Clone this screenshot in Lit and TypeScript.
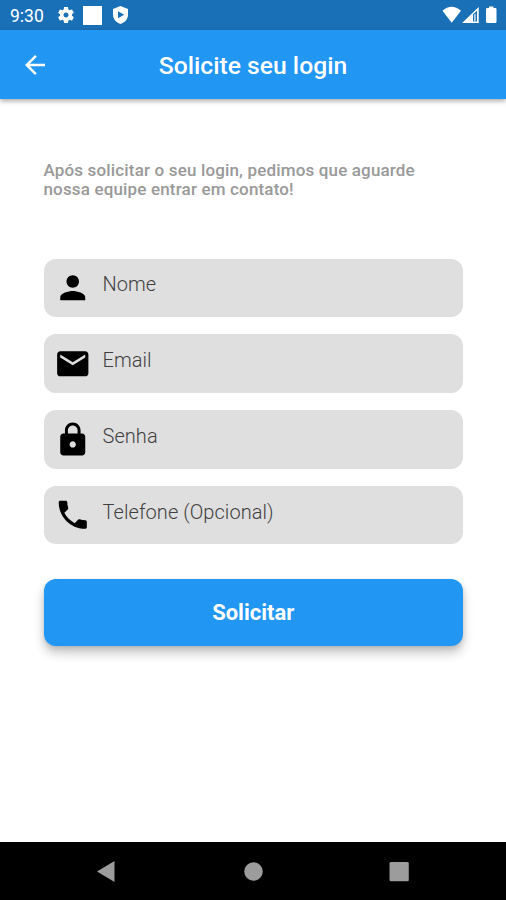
import { LitElement, html, css, svg } from "lit";
import { customElement, property } from "lit/decorators.js";

const icons: Record<string, string> = {
  person: "M12 12c2.21 0 4-1.79 4-4s-1.79-4-4-4-4 1.79-4 4 1.79 4 4 4zm0 2c-2.67 0-8 1.34-8 4v2h16v-2c0-2.66-5.33-4-8-4z",
  mail: "M20 4H4c-1.1 0-1.99.9-1.99 2L2 18c0 1.1.9 2 2 2h16c1.1 0 2-.9 2-2V6c0-1.1-.9-2-2-2zm0 4l-8 5-8-5V6l8 5 8-5v2z",
  lock: "M18 8h-1V6c0-2.76-2.24-5-5-5S7 3.24 7 6v2H6c-1.1 0-2 .9-2 2v10c0 1.1.9 2 2 2h12c1.1 0 2-.9 2-2V10c0-1.1-.9-2-2-2zm-6 9c-1.1 0-2-.9-2-2s.9-2 2-2 2 .9 2 2-.9 2-2 2zm3.1-9H8.9V6c0-1.71 1.39-3.1 3.1-3.1s3.1 1.39 3.1 3.1v2z",
  phone: "M6.62 10.79c1.44 2.83 3.76 5.14 6.59 6.59l2.2-2.2c.27-.27.67-.36 1.02-.24 1.12.37 2.33.57 3.57.57.55 0 1 .45 1 1V20c0 .55-.45 1-1 1-9.39 0-17-7.61-17-17 0-.55.45-1 1-1h3.5c.55 0 1 .45 1 1 0 1.25.2 2.45.57 3.57.11.35.03.74-.25 1.02l-2.2 2.2z",
  back: "M20 11H7.83l5.59-5.59L12 4l-8 8 8 8 1.41-1.41L7.83 13H20v-2z",
  gear: "M19.14 12.94c.04-.3.06-.61.06-.94 0-.32-.02-.64-.07-.94l2.03-1.58c.18-.14.23-.41.12-.61l-1.92-3.32c-.12-.22-.37-.29-.59-.22l-2.39.96c-.5-.38-1.03-.7-1.62-.94l-.36-2.54c-.04-.24-.24-.41-.48-.41h-3.84c-.24 0-.43.17-.47.41l-.36 2.54c-.59.24-1.13.57-1.62.94l-2.39-.96c-.22-.08-.47 0-.59.22L2.74 8.87c-.12.21-.08.47.12.61l2.03 1.58c-.05.3-.09.63-.09.94s.02.64.07.94l-2.03 1.58c-.18.14-.23.41-.12.61l1.92 3.32c.12.22.37.29.59.22l2.39-.96c.5.38 1.03.7 1.62.94l.36 2.54c.05.24.24.41.48.41h3.84c.24 0 .44-.17.47-.41l.36-2.54c.59-.24 1.13-.56 1.62-.94l2.39.96c.22.08.47 0 .59-.22l1.92-3.32c.12-.22.07-.47-.12-.61l-2.01-1.58zM12 15c-1.65 0-3-1.35-3-3s1.35-3 3-3 3 1.35 3 3-1.35 3-3 3z",
};

@customElement("app-icon")
export class AppIcon extends LitElement {
  @property() name = "";

  static styles = css`
    :host { display: block; flex: none; }
    .glyph { display: block; width: 100%; height: 100%; fill: currentColor; }
  `;

  render() {
    return html`<svg class="glyph" viewBox="0 0 24 24">${svg`<path d=${icons[this.name]}></path>`}</svg>`;
  }
}

@customElement("form-field")
export class FormField extends LitElement {
  @property() icon = "";
  @property() label = "";

  static styles = css`
    :host {
      display: flex;
      align-items: center;
      box-sizing: border-box;
      height: 58.5px;
      padding-left: 10.5px;
      border-radius: 12px;
      background: #dfdfdf;
    }
    .icon { width: 37.5px; height: 37.5px; color: #000; }
    .label {
      margin-left: 11px;
      padding-bottom: 7px;
      color: #3f3f3f;
      font-size: 20px;
      font-weight: 300;
      line-height: 24px;
      letter-spacing: 0.06px;
    }
  `;

  render() {
    return html`
      <app-icon class="icon" name=${this.icon}></app-icon>
      <span class="label">${this.label}</span>
    `;
  }
}

@customElement("app-root")
export class AppRoot extends LitElement {
  static styles = css`
    :host {
      display: flex;
      flex-direction: column;
      width: 506px;
      height: 900px;
      overflow: hidden;
      background: #fff;
      font-family: Roboto, "Liberation Sans", sans-serif;
    }
    .status {
      display: flex;
      align-items: center;
      flex: none;
      box-sizing: border-box;
      height: 30px;
      padding: 0 8px 0 10px;
      background: #1a70b7;
      color: #fff;
    }
    .time { width: 46px; padding-top: 2px; font-size: 17.5px; line-height: 20px; white-space: nowrap; }
    .gear { width: 20px; height: 20px; }
    .square { width: 19px; height: 19px; margin: 1px 11px 0 7px; background: #fff; }
    .shield { width: 15px; height: 18px; }
    .signals { display: flex; margin-left: auto; }
    .bar {
      display: grid;
      grid-template-columns: 70px 1fr 70px;
      align-items: center;
      flex: none;
      height: 69px;
      background: #2196f3;
      color: #fff;
      box-shadow: 0 2px 5px rgba(0, 0, 0, 0.34);
    }
    .back { width: 30px; height: 30px; justify-self: center; }
    .title {
      margin: 0;
      padding-top: 3px;
      text-align: center;
      font-size: 24.7px;
      line-height: 30px;
      font-weight: 500;
    }
    .content { flex: 1; padding: 61.5px 43px 0 43.5px; }
    .intro {
      margin: 0;
      color: #999;
      font-size: 17px;
      line-height: 19.5px;
      font-weight: 500;
      letter-spacing: 0.16px;
    }
    .line { display: block; white-space: nowrap; }
    .fields { display: grid; gap: 17.3px; margin-top: 59px; }
    .submit {
      display: block;
      width: 100%;
      height: 67px;
      margin-top: 34.6px;
      padding: 2px 0 0;
      border: 0;
      border-radius: 12px;
      background: #2196f3;
      color: #fff;
      font: 700 22px/26px Roboto, "Liberation Sans", sans-serif;
      box-shadow: 0 7px 11px rgba(0, 0, 0, 0.22), 0 2px 5px rgba(0, 0, 0, 0.12);
    }
    .nav { flex: none; height: 58.5px; background: #000; }
    .keys { display: block; fill: #9c9c9c; }
  `;

  render() {
    return html`
      <div class="status">
        <span class="time">9:30</span>
        <app-icon class="gear" name="gear"></app-icon>
        <div class="square"></div>
        <svg class="shield" viewBox="0 0 15 18">
          <path fill="#fff" d="M7.5 0L15 2.9V8.5C15 13 12 16.5 7.5 18C3 16.5 0 13 0 8.5V2.9Z"></path>
          <path fill="#1a70b7" d="M5 5.2L11.2 8.7L5 12.2Z"></path>
        </svg>
        <svg class="signals" width="56" height="18" viewBox="0 0 56 18" fill="#fff">
          <path d="M0.5 4.8Q9.5 -3.2 19 4.8L9.7 16.8Z"></path>
          <path fill-rule="evenodd" d="M20 17L36.7 1V17ZM31 8.3V15.5H35V4.8Z"></path>
          <path d="M32.3 8.5L33.5 7.5V15.5H32.3Z"></path>
          <path d="M47 0.5H51.5V2H53.2Q54.5 2 54.5 3.3V15.7Q54.5 17 53.2 17H45.3Q44 17 44 15.7V3.3Q44 2 45.3 2H47Z"></path>
        </svg>
      </div>
      <header class="bar">
        <app-icon class="back" name="back"></app-icon>
        <h1 class="title">Solicite seu login</h1>
      </header>
      <main class="content">
        <p class="intro">
          <span class="line">Após solicitar o seu login, pedimos que aguarde</span>
          <span class="line">nossa equipe entrar em contato!</span>
        </p>
        <div class="fields">
          <form-field icon="person" label="Nome"></form-field>
          <form-field icon="mail" label="Email"></form-field>
          <form-field icon="lock" label="Senha"></form-field>
          <form-field icon="phone" label="Telefone (Opcional)"></form-field>
        </div>
        <button class="submit">Solicitar</button>
      </main>
      <nav class="nav">
        <svg class="keys" width="506" height="58" viewBox="0 0 506 58">
          <path d="M97 29.5L114.5 19V40Z"></path>
          <circle cx="253.5" cy="29.5" r="9.3"></circle>
          <rect x="389.5" y="20" width="19.3" height="19.3" rx="1.5"></rect>
        </svg>
      </nav>
    `;
  }
}
